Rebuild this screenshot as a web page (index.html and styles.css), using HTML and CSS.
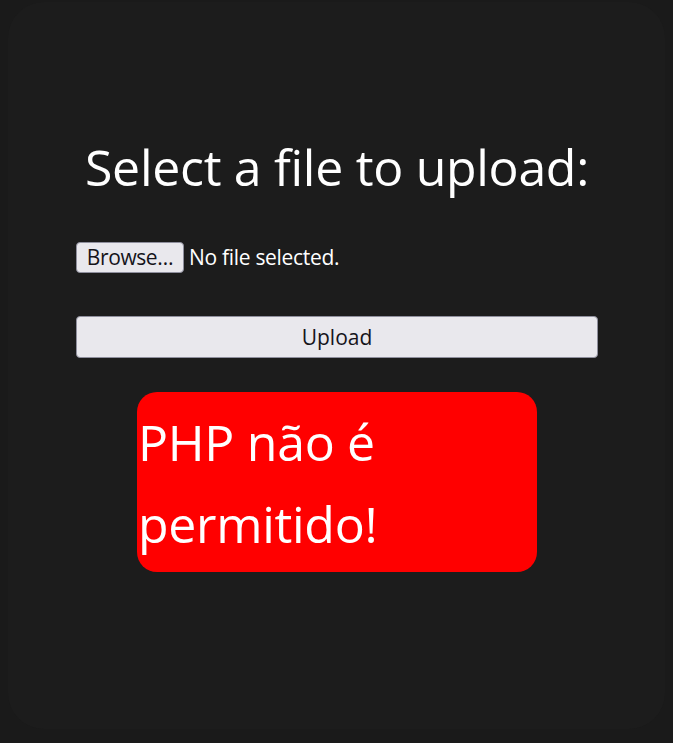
FILE: index.html
```html
<!DOCTYPE html>
<html lang="pt">
<head>
<meta charset="utf-8">
<link rel="stylesheet" href="styles.css">
<title>Upload</title>
</head>
<body>
<main class="card">
  <h1 class="title">Select a file to upload:</h1>
  <form class="form">
    <div class="file-row">
      <button type="button" class="browse">Browse…</button>
      <span class="file-label">No file selected.</span>
    </div>
    <button type="button" class="upload">Upload</button>
  </form>
  <div class="error">PHP não é permitido!</div>
</main>
</body>
</html>
```

FILE: styles.css
```css
html, body {
  margin: 0;
  padding: 0;
  background: #1a1a1a;
}
body {
  padding: 2px 8px 0;
  font-family: "Open Sans", "Noto Sans", sans-serif;
  color: #fff;
}
.card {
  box-sizing: border-box;
  height: 727px;
  background: #1c1c1c;
  border-radius: 36px;
  padding: 132px 67px 0 68px;
  display: flex;
  flex-direction: column;
  align-items: center;
}
.title {
  margin: 0;
  font-size: 50px;
  font-weight: 400;
  line-height: 66px;
  text-align: center;
  letter-spacing: -0.3px;
}
.form {
  align-self: stretch;
  margin-top: 41px;
  display: flex;
  flex-direction: column;
}
.file-row {
  display: flex;
  align-items: center;
  gap: 5px;
  height: 32px;
}
.browse, .upload {
  font-family: "Open Sans", "Noto Sans", sans-serif;
  background: #e9e8ed;
  color: #15141a;
  border: 1px solid #8f8f9d;
  border-radius: 4px;
  font-size: 21px;
}
.browse {
  box-sizing: border-box;
  height: 31px;
  width: 108px;
  padding: 0;
  letter-spacing: -0.4px;
}
.file-label {
  font-size: 21px;
  letter-spacing: -0.3px;
}
.upload {
  box-sizing: border-box;
  margin-top: 43px;
  height: 42px;
  width: 100%;
}
.error {
  box-sizing: border-box;
  margin-top: 34px;
  width: 400px;
  height: 180px;
  background: #ff0000;
  border-radius: 20px;
  color: #fff;
  font-size: 50px;
  line-height: 82px;
  padding: 9px 0 0 1px;
  letter-spacing: -0.3px;
}
```
